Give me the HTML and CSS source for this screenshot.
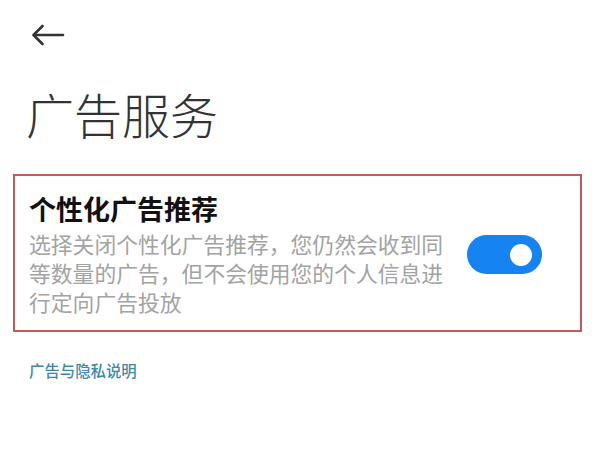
FILE: index.html
```html
<!DOCTYPE html>
<html lang="zh-CN">
<head>
<meta charset="utf-8">
<link rel="stylesheet" href="styles.css">
</head>
<body>
<div class="page">
  <div class="topbar">
    <svg class="back" width="34" height="22" viewBox="0 0 34 22" fill="none" stroke="#333" stroke-width="2.6" stroke-linecap="round" stroke-linejoin="round">
      <path d="M32 11H3"/>
      <path d="M11.5 2L2.5 11l9 9"/>
    </svg>
  </div>
  <h1 class="title">广告服务</h1>
  <div class="card">
    <div class="text">
      <div class="heading">个性化广告推荐</div>
      <div class="desc">选择关闭个性化广告推荐，您仍然会收到同等数量的广告，但不会使用您的个人信息进行定向广告投放</div>
    </div>
    <div class="switch"><div class="knob"></div></div>
  </div>
  <div class="link">广告与隐私说明</div>
</div>
</body>
</html>
```
FILE: styles.css
```css
html, body {
  margin: 0;
  padding: 0;
  background: #ffffff;
}
body {
  width: 600px;
  height: 450px;
  overflow: hidden;
  font-family: "Noto Sans CJK SC", "Noto Sans", sans-serif;
}
.page {
  display: flex;
  flex-direction: column;
}
.topbar {
  height: 70px;
  padding-left: 31px;
  display: flex;
  align-items: center;
}
.back {
  display: block;
}
.title {
  margin: 13px 0 0 26px;
  font-size: 48px;
  font-weight: 300;
  line-height: 60px;
  color: #333;
}
.card {
  margin: 31px 0 0 13px;
  width: 565px;
  height: 154px;
  border: 2px solid #c25a55;
  display: flex;
  align-items: center;
}
.text {
  width: 420px;
  padding-left: 14px;
}
.heading {
  font-size: 27px;
  font-weight: 700;
  line-height: 36px;
  color: #111;
}
.desc {
  font-size: 21.8px;
  line-height: 29px;
  color: #a3a3a3;
  margin-top: 2px;
}
.switch {
  margin-left: 18px;
  margin-top: 3px;
  width: 75px;
  height: 39px;
  border-radius: 20px;
  background: #1683f2;
  display: flex;
  align-items: center;
  justify-content: flex-end;
}
.knob {
  width: 22px;
  height: 22px;
  border-radius: 50%;
  background: #fff;
  margin-right: 10px;
}
.link {
  margin: 28px 0 0 29px;
  font-size: 15.4px;
  line-height: 20px;
  color: #3d8aa6;
  font-weight: 500;
}
```
